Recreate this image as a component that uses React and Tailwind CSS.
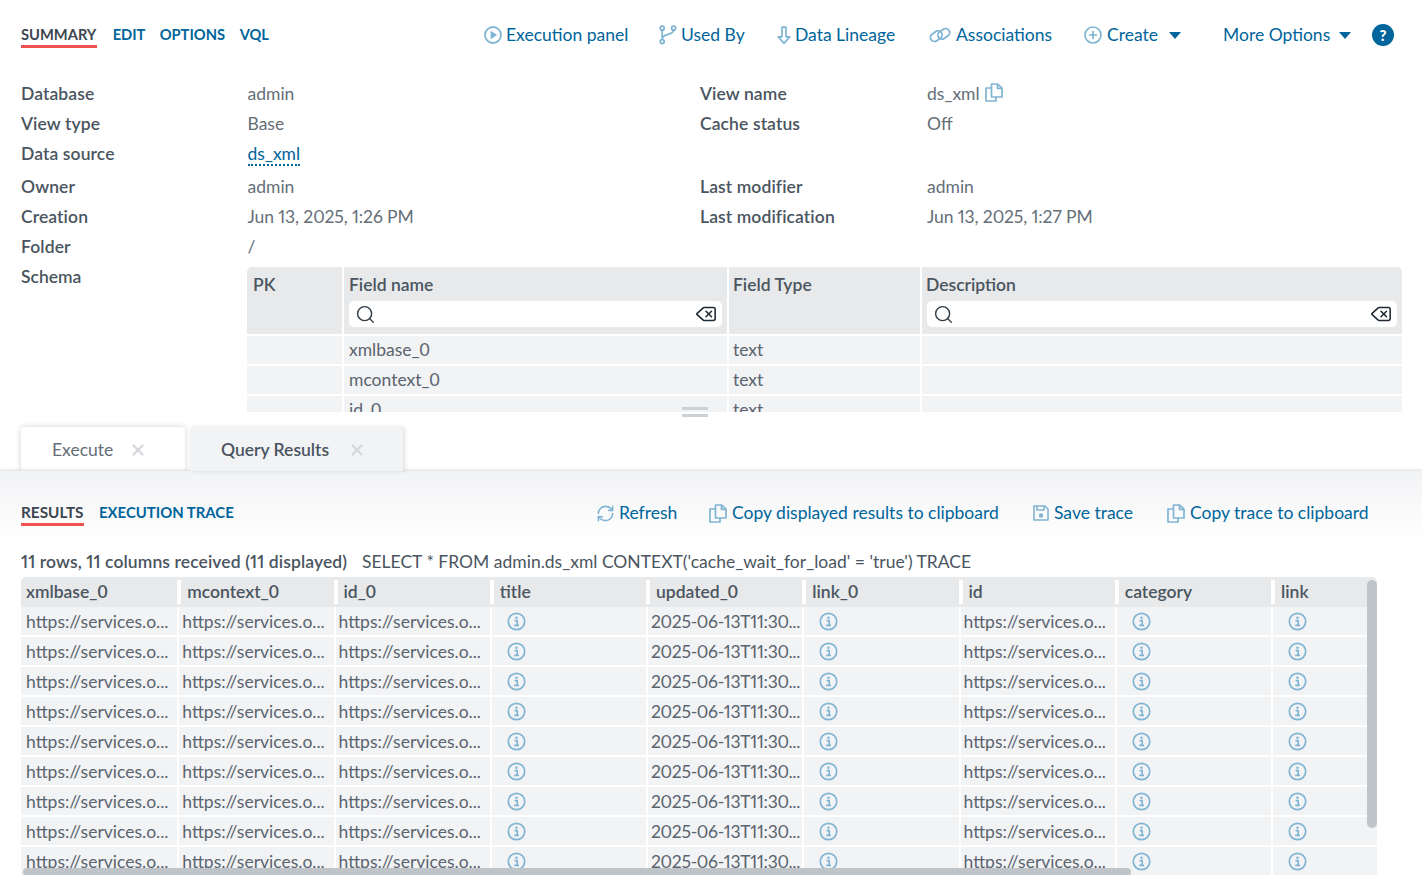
import { RefreshCw, Search, Delete, X } from 'lucide-react';

const LINK = 'text-[#00659b]';
const ICON = 'text-[#80b4d3] shrink-0';

function InfoIcon() {
  return (
    <svg width="19" height="19" viewBox="0 0 19 19" fill="none" className={ICON}>
      <circle cx="9.5" cy="9.5" r="8.2" stroke="currentColor" strokeWidth="1.7" />
      <circle cx="9.5" cy="5.8" r="1.2" fill="currentColor" />
      <path d="M7.6 8.6h2.6v4.6M7.2 13.4h4.8" stroke="currentColor" strokeWidth="1.6" />
    </svg>
  );
}

function PlayIcon() {
  return (
    <svg width="18" height="18" viewBox="0 0 18 18" fill="none" className={ICON}>
      <circle cx="9" cy="9" r="8" stroke="currentColor" strokeWidth="1.8" />
      <path d="M6.6 4.8 13.2 9l-6.6 4.2z" fill="currentColor" />
    </svg>
  );
}

function ForkIcon() {
  return (
    <svg width="18" height="20" viewBox="0 0 18 20" fill="none" stroke="currentColor" strokeWidth="1.7" className={ICON}>
      <circle cx="3.2" cy="3.2" r="2" />
      <circle cx="14.6" cy="3.2" r="2" />
      <circle cx="3.2" cy="16.6" r="2" />
      <path d="M3.2 5.2v9.4M14.6 5.2c0 5-11.4 3.4-11.4 8.6" />
    </svg>
  );
}

function ArrowIcon() {
  return (
    <svg width="14" height="19" viewBox="0 0 14 19" fill="none" stroke="currentColor" strokeWidth="1.7" strokeLinejoin="round" className={ICON}>
      <path d="M5 1.2h4v9.6h3.8L7 17.4 1.2 10.8H5z" />
    </svg>
  );
}

function ChainIcon() {
  return (
    <svg width="22" height="18" viewBox="0 0 22 18" fill="none" stroke="currentColor" strokeWidth="1.8" className={ICON}>
      <rect x="1" y="6.2" width="12.5" height="8" rx="4" transform="rotate(-35 7.2 10.2)" />
      <rect x="8.5" y="3.8" width="12.5" height="8" rx="4" transform="rotate(-35 14.8 7.8)" />
    </svg>
  );
}

function PlusIcon() {
  return (
    <svg width="18" height="18" viewBox="0 0 18 18" fill="none" stroke="currentColor" strokeWidth="1.7" className={ICON}>
      <circle cx="9" cy="9" r="8" />
      <path d="M9 5v8M5 9h8" />
    </svg>
  );
}

function CopyIcon() {
  return (
    <svg width="18" height="19" viewBox="0 0 18 19" fill="none" stroke="currentColor" strokeWidth="1.7" strokeLinejoin="round" className={ICON}>
      <path d="M6.5 1h6.2l4.3 4.2V14H6.5z" />
      <path d="M12.5 1v4.4H17" />
      <path d="M6.5 5H1v13h10v-4" />
    </svg>
  );
}

function SaveIcon() {
  return (
    <svg width="16" height="16" viewBox="0 0 16 16" fill="none" stroke="currentColor" strokeWidth="1.6" strokeLinejoin="round" className={ICON}>
      <path d="M1 1h11l3 3v11H1z" />
      <path d="M4 1v4h7V1" />
      <circle cx="8" cy="10.5" r="1.4" fill="currentColor" />
    </svg>
  );
}

function RefreshIcon() {
  return <RefreshCw size={19} strokeWidth={2} className={ICON} />;
}

function Caret({ className }) {
  return <span className={`w-0 h-0 shrink-0 border-l-[6px] border-r-[6px] border-t-[7px] border-l-transparent border-r-transparent border-t-[#00659b] ${className}`} />;
}

function Action({ icon: Icon, label, className = '', textWidth, gap = 'gap-[5px]' }) {
  return (
    <div className={`flex items-center shrink-0 ${gap} ${className}`}>
      <Icon />
      <span className={`${LINK} whitespace-nowrap ${textWidth}`}>{label}</span>
    </div>
  );
}

function Row({ label, value, label2, value2, className = 'h-[30px]', children }) {
  return (
    <div className={`flex items-center ${className}`}>
      <div className="w-[226.5px] font-semibold text-[#4a5560] tracking-[0.1px]">{label}</div>
      <div className="w-[452.5px] text-[#646e78] proportional-nums">{children || value}</div>
      <div className="w-[227px] font-semibold text-[#4a5560] tracking-[0.1px]">{label2}</div>
      <div className="flex items-center gap-[5px] text-[#646e78] proportional-nums">
        {value2}
        {label2 === 'View name' && <span className="-mt-1 flex"><CopyIcon /></span>}
      </div>
    </div>
  );
}

function DateText({ children }) {
  return <span className="tracking-[-0.1px]">{children}</span>;
}

function FilterBox() {
  return (
    <div className="h-[26px] bg-white rounded-[5px] flex items-center justify-between pl-[6px] pr-[5px] mt-[5px]">
      <Search size={21} strokeWidth={1.6} className="text-[#2f3b45]" />
      <Delete size={22} strokeWidth={1.7} className="text-[#1f2933]" />
    </div>
  );
}

const schemaRows = [['xmlbase_0', 'text'], ['mcontext_0', 'text'], ['id_0', 'text']];

function SchemaTable() {
  return (
    <div className="ml-[226px] w-[1155px] text-[#4a5560]">
      <div className="flex h-[67px] bg-[#e8e9eb] rounded-t-[5px] font-semibold">
        <div className="w-[95px] pl-[6px] pt-[7px]">PK</div>
        <div className="w-[385px] border-l-2 border-white px-[5px] pt-[7px]">
          Field name
          <FilterBox />
        </div>
        <div className="w-[193px] border-l-2 border-white pl-[4px] pt-[7px]">Field Type</div>
        <div className="flex-1 border-l-2 border-white pl-[4px] pr-[5px] pt-[7px]">
          Description
          <div className="ml-[1px]"><FilterBox /></div>
        </div>
      </div>
      {schemaRows.map(([name, type]) => (
        <div key={name} className="flex h-[30px] bg-[#f2f3f5] border-t-2 border-white text-[#5a646e]">
          <div className="w-[95px]" />
          <div className="w-[385px] border-l-2 border-white px-[5px] flex items-center">{name}</div>
          <div className="w-[193px] border-l-2 border-white pl-[4px] flex items-center">{type}</div>
          <div className="flex-1 border-l-2 border-white" />
        </div>
      ))}
    </div>
  );
}

const columns = ['xmlbase_0', 'mcontext_0', 'id_0', 'title', 'updated_0', 'link_0', 'id', 'category', 'link'];
const URL_TEXT = 'https://services.o...';
const rowCells = [URL_TEXT, URL_TEXT, URL_TEXT, null, '2025-06-13T11:30...', null, URL_TEXT, null, null];

function ResultsTable() {
  return (
    <div className="relative w-[1356px] mt-[4px] text-[#4a5560]">
      <div className="flex h-[30px] bg-[#e8e9eb] rounded-t-[5px] font-semibold">
        {columns.map((c, i) => (
          <div key={c + i} className="w-[156.25px] shrink-0 flex items-center">
            {i > 0 && <span className="w-[4px] h-[24px] bg-white mr-[6px] shrink-0" />}
            <span className={i === 0 ? 'pl-[5px]' : ''}>{c}</span>
          </div>
        ))}
      </div>
      {Array.from({ length: 9 }).map((_, r) => (
        <div key={r} className="flex h-[30px] bg-[#f2f3f5] border-b-2 border-white text-[#5a646e]">
          {rowCells.map((cell, i) => (
            <div key={i} className={`w-[156.25px] shrink-0 flex items-center whitespace-nowrap ${i > 0 ? 'border-l-2 border-white' : ''} ${cell ? (i === 0 ? 'pl-[5px]' : 'pl-[3px]') : 'pl-[15px]'}`}>
              {cell ? <span className={`pt-[1px] ${i === 4 ? 'proportional-nums tracking-[-0.3px]' : ''}`}>{cell}</span> : <InfoIcon />}
            </div>
          ))}
        </div>
      ))}
      <div className="absolute right-0 top-[3px] w-[10px] h-[248px] rounded-[5px] bg-[#bfc4c8]" />
      <div className="absolute left-[2px] top-[291px] w-[1108px] h-[8px] rounded-[5px] bg-[#bfc4c8]" />
    </div>
  );
}

export default function App() {
  return (
    <div className="font-['Lato','Open_Sans',sans-serif] h-[875px] w-[1422px] overflow-hidden bg-white text-[17.5px] leading-[22px]">
      <div className="h-[412px] overflow-hidden px-[21px]">
        <div className="flex items-center h-[24px] mt-[23px]">
          <div className="flex items-center w-[248px] shrink-0 text-[14.7px] font-bold uppercase whitespace-nowrap">
            <span className="w-[76px] text-[#3c4650] border-b-[3px] border-[#f0524f] mt-[1px]">Summary</span>
            <span className={`${LINK} ml-[16px] w-[31px] -mt-[2px]`}>Edit</span>
            <span className={`${LINK} ml-[16px] w-[65px] -mt-[2px]`}>Options</span>
            <span className={`${LINK} ml-[15px] -mt-[2px]`}>VQL</span>
          </div>
          <Action icon={PlayIcon} label="Execution panel" textWidth="w-[122px]" gap="gap-[4px]" className="ml-[215px]" />
          <Action icon={ForkIcon} label="Used By" textWidth="w-[64px]" gap="gap-[4px]" className="ml-[31px]" />
          <Action icon={ArrowIcon} label="Data Lineage" textWidth="w-[102px]" gap="gap-[4px]" className="ml-[32px]" />
          <Action icon={ChainIcon} label="Associations" textWidth="w-[96px]" className="ml-[32px]" />
          <Action icon={PlusIcon} label="Create" textWidth="w-[51px]" className="ml-[32px]" />
          <Caret className="ml-[11px]" />
          <span className={`${LINK} ml-[42px] w-[104px] whitespace-nowrap`}>More Options</span>
          <Caret className="ml-[12px]" />
          <span className="ml-[21px] w-[22px] h-[22px] shrink-0 rounded-full bg-[#00659b] text-white text-[15px] font-black flex items-center justify-center">?</span>
        </div>

        <div className="mt-[32px]">
          <Row label="Database" value="admin" label2="View name" value2="ds_xml" />
          <Row label="View type" value="Base" label2="Cache status" value2="Off" />
          <Row label="Data source" className="h-[33px] pb-[3px]">
            <span className={`${LINK} border-b-2 border-dotted border-[#00659b]`}>ds_xml</span>
          </Row>
          <Row label="Owner" value="admin" label2="Last modifier" value2="admin" />
          <Row label="Creation" value={<DateText>Jun 13, 2025, 1:26 PM</DateText>} label2="Last modification" value2={<DateText>Jun 13, 2025, 1:27 PM</DateText>} />
          <Row label="Folder" value="/" />
          <div className="relative mt-[5px]">
            <div className="absolute left-0 -top-px font-semibold text-[#4a5560]">Schema</div>
            <SchemaTable />
          </div>
        </div>
      </div>
      <div className="absolute left-[682px] top-[407px] w-[26px] h-[10px] flex flex-col justify-between">
        <span className="h-[3px] bg-[#ced1d4]" />
        <span className="h-[3px] bg-[#ced1d4]" />
      </div>

      <div className="flex items-end h-[59px] px-[21px] gap-[5px]">
        <div className="h-[44px] w-[164px] bg-white rounded-t-[4px] shadow-[0_0_6px_rgba(0,0,0,0.18)] flex items-center pl-[31px] pt-[2px] text-[#646e78]">
          <span className="w-[61px]">Execute</span>
          <X size={18} strokeWidth={3} className="text-[#d5d8db] ml-[16px]" />
        </div>
        <div className="relative z-10 h-[44px] w-[213px] bg-[#f2f3f5] rounded-t-[4px] shadow-[2px_0_4px_rgba(0,0,0,0.12)] flex items-center pl-[31px] pt-[2px] font-semibold text-[#4a5560]">
          <span className="w-[110px] whitespace-nowrap">Query Results</span>
          <X size={18} strokeWidth={3} className="text-[#d5d8db] ml-[17px]" />
        </div>
      </div>

      <div className="h-[404px] overflow-hidden bg-gradient-to-b from-[#f2f3f5] to-white to-[70px] px-[21px] shadow-[0_-1px_3px_rgba(0,0,0,0.15)] relative">
        <div className="flex items-center h-[24px] mt-[30px]">
          <span className="w-[63px] text-[15.3px] font-bold uppercase text-[#3c4650] border-b-[3px] border-[#f0524f] mt-[1px]">Results</span>
          <span className={`${LINK} w-[135px] whitespace-nowrap text-[14.9px] font-bold uppercase ml-[15px] -mt-[2px]`}>Execution trace</span>
          <Action icon={RefreshIcon} label="Refresh" textWidth="w-[58px]" gap="gap-[4px]" className="ml-[362px]" />
          <Action icon={CopyIcon} label="Copy displayed results to clipboard" textWidth="w-[269px]" className="ml-[32px]" />
          <Action icon={SaveIcon} label="Save trace" textWidth="w-[81px]" className="ml-[32px]" />
          <Action icon={CopyIcon} label="Copy trace to clipboard" textWidth="w-[178px]" className="ml-[32px]" />
        </div>
        <div className="flex h-[22px] mt-[26px] whitespace-nowrap">
          <span className="w-[326px] font-semibold text-[#4a5560] proportional-nums tracking-[0.1px]">11 rows, 11 columns received (11 displayed)</span>
          <span className="ml-[15px] text-[#4a5560]">SELECT * FROM admin.ds_xml CONTEXT('cache_wait_for_load' = 'true') TRACE</span>
        </div>
        <ResultsTable />
      </div>
    </div>
  );
}
